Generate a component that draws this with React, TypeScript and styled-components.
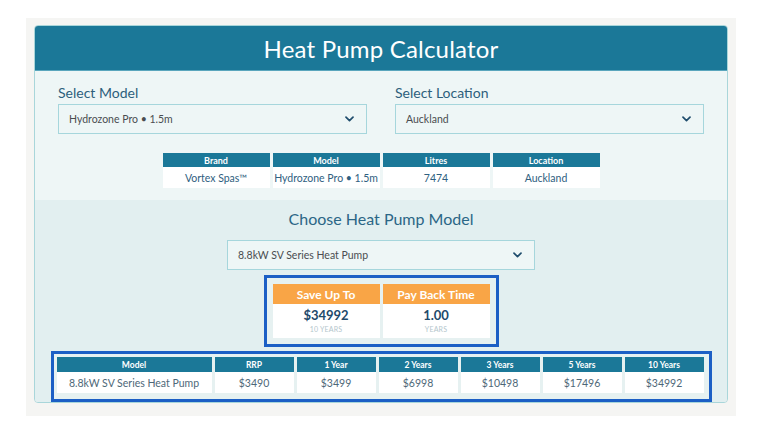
import React from "react"
import styled, { createGlobalStyle } from "styled-components"

const GlobalStyle = createGlobalStyle`
  html, body {
    margin: 0;
    padding: 0;
    background: #ffffff;
    font-family: Lato, "Open Sans", Arial, sans-serif;
  }
`

const Page = styled.div`
  width: 768px;
  height: 432px;
  padding: 18px 0 0 26px;
  box-sizing: border-box;
`

const Frame = styled.div`
  width: 710px;
  height: 398px;
  background: #f5f5f3;
  padding: 7px 8px;
  box-sizing: border-box;
`

const Card = styled.div`
  width: 694px;
  height: 378px;
  border: 1px solid #a9d6da;
  border-radius: 4px;
  overflow: hidden;
  box-sizing: border-box;
  display: flex;
  flex-direction: column;
`

const Header = styled.div`
  height: 45px;
  background: #1b7898;
  color: #ffffff;
  display: flex;
  align-items: center;
  justify-content: center;
  font-size: 24px;
  letter-spacing: 0.2px;
  border-bottom: 1px solid #5aa6bd;
`

const TopSection = styled.div`
  background: #eef6f6;
  padding: 14px 23px 12px;
  display: flex;
  flex-direction: column;
  align-items: center;
`

const SelectRow = styled.div`
  width: 100%;
  display: grid;
  grid-template-columns: 1fr 1fr;
  gap: 28px;
`

const Field = styled.div`
  display: flex;
  flex-direction: column;
`

const Label = styled.div`
  font-size: 14px;
  line-height: 16px;
  color: #2d5f7c;
  margin-bottom: 3px;
`

const SelectBox = styled.div<{ $width?: number }>`
  height: 30px;
  width: ${(p) => (p.$width ? `${p.$width}px` : "100%")};
  box-sizing: border-box;
  border: 1px solid #a6d6dc;
  background: #eef6f6;
  display: flex;
  align-items: center;
  justify-content: space-between;
  padding: 0 12px 0 10px;
  font-size: 10.5px;
  color: #4a4d50;
  white-space: nowrap;
`

const InfoGrid = styled.div<{ $cols: string }>`
  display: grid;
  grid-template-columns: ${(p) => p.$cols};
  column-gap: 3px;
`

const InfoHead = styled.div<{ $h: number; $fs: number }>`
  background: #1b7898;
  color: #ffffff;
  font-weight: 700;
  font-size: ${(p) => p.$fs}px;
  height: ${(p) => p.$h}px;
  display: flex;
  align-items: center;
  justify-content: center;
  white-space: nowrap;
`

const InfoCell = styled.div<{ $h: number; $fs: number; $color?: string }>`
  background: #ffffff;
  color: ${(p) => p.$color ?? "#2f6080"};
  font-size: ${(p) => p.$fs}px;
  height: ${(p) => p.$h}px;
  display: flex;
  align-items: center;
  justify-content: center;
  white-space: nowrap;
`

const LowerSection = styled.div`
  flex: 1;
  background: #e2eff0;
  padding: 9px 0 0;
  display: flex;
  flex-direction: column;
  align-items: center;
`

const SectionTitle = styled.div`
  font-size: 16px;
  line-height: 20px;
  color: #2b6686;
  margin-bottom: 11px;
`

const Highlight = styled.div`
  border: 3px solid #1c5fc5;
  background: #e6f1f1;
  box-sizing: border-box;
`

const SaveBox = styled(Highlight)`
  margin-top: 5px;
  padding: 6px;
  display: grid;
  grid-template-columns: 107px 107px;
  gap: 3px;
`

const SaveCard = styled.div`
  display: flex;
  flex-direction: column;
`

const SaveHead = styled.div`
  height: 20px;
  background: #f9a546;
  color: #ffffff;
  font-weight: 700;
  font-size: 12px;
  display: flex;
  align-items: center;
  justify-content: center;
`

const SaveBody = styled.div`
  height: 34px;
  background: #ffffff;
  display: flex;
  flex-direction: column;
  align-items: center;
  justify-content: center;
`

const SaveValue = styled.div`
  font-weight: 700;
  font-size: 13px;
  line-height: 15px;
  color: #1e4a6b;
`

const SaveSub = styled.div`
  font-size: 7px;
  line-height: 9px;
  color: #b4c6cc;
  margin-top: 2px;
  letter-spacing: 0.2px;
`

const CostBox = styled(Highlight)`
  margin-top: 4px;
  width: 661px;
  padding: 3px 5px 6px 3px;
`

const Chevron = () => (
  <svg width="9" height="6" viewBox="0 0 9 6">
    <polyline
      points="1,1.2 4.5,4.6 8,1.2"
      fill="none"
      stroke="#1f4d6d"
      strokeWidth="1.7"
      strokeLinecap="round"
      strokeLinejoin="round"
    />
  </svg>
)

const info = [
  ["Brand", "Vortex Spas™"],
  ["Model", "Hydrozone Pro • 1.5m"],
  ["Litres", "7474"],
  ["Location", "Auckland"]
]

const costs = [
  ["Model", "8.8kW SV Series Heat Pump"],
  ["RRP", "$3490"],
  ["1 Year", "$3499"],
  ["2 Years", "$6998"],
  ["3 Years", "$10498"],
  ["5 Years", "$17496"],
  ["10 Years", "$34992"]
]

const savings = [
  ["Save Up To", "$34992", "10 YEARS"],
  ["Pay Back Time", "1.00", "YEARS"]
]

export default function App() {
  return (
    <Page>
      <GlobalStyle />
      <Frame>
        <Card>
          <Header>Heat Pump Calculator</Header>
          <TopSection>
            <SelectRow>
              <Field>
                <Label>Select Model</Label>
                <SelectBox>
                  <span>Hydrozone Pro • 1.5m</span>
                  <Chevron />
                </SelectBox>
              </Field>
              <Field>
                <Label>Select Location</Label>
                <SelectBox>
                  <span>Auckland</span>
                  <Chevron />
                </SelectBox>
              </Field>
            </SelectRow>
            <InfoGrid $cols="repeat(4, 107px)" style={{ marginTop: 19 }}>
              {info.map(([h]) => (
                <InfoHead key={h} $h={14} $fs={9}>
                  {h}
                </InfoHead>
              ))}
              {info.map(([h, v]) => (
                <InfoCell key={h} $h={21} $fs={10.5}>
                  {v}
                </InfoCell>
              ))}
            </InfoGrid>
          </TopSection>
          <LowerSection>
            <SectionTitle>Choose Heat Pump Model</SectionTitle>
            <SelectBox $width={308}>
              <span>8.8kW SV Series Heat Pump</span>
              <Chevron />
            </SelectBox>
            <SaveBox>
              {savings.map(([h, v, s]) => (
                <SaveCard key={h}>
                  <SaveHead>{h}</SaveHead>
                  <SaveBody>
                    <SaveValue>{v}</SaveValue>
                    <SaveSub>{s}</SaveSub>
                  </SaveBody>
                </SaveCard>
              ))}
            </SaveBox>
            <CostBox>
              <InfoGrid $cols="155px repeat(6, 1fr)">
                {costs.map(([h]) => (
                  <InfoHead key={h} $h={15} $fs={8.5}>
                    {h}
                  </InfoHead>
                ))}
                {costs.map(([h, v]) => (
                  <InfoCell key={h} $h={21} $fs={10.5} $color="#4e6878">
                    {v}
                  </InfoCell>
                ))}
              </InfoGrid>
            </CostBox>
          </LowerSection>
        </Card>
      </Frame>
    </Page>
  )
}
